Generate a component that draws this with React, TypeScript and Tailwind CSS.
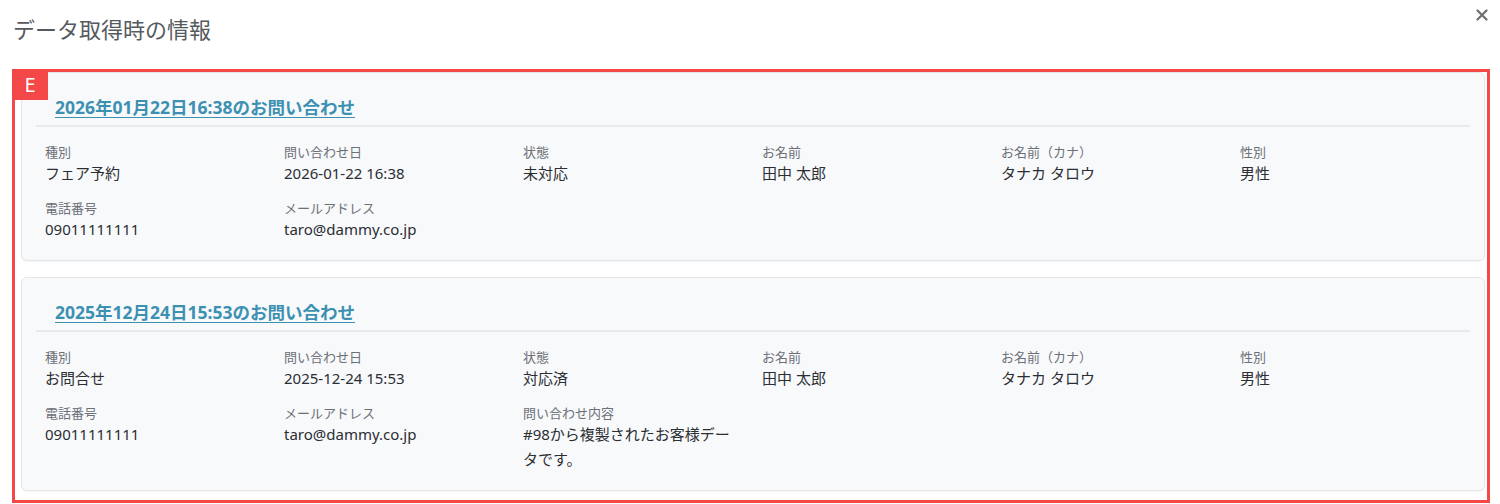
import React from 'react';

type Field = { label: string; value: string };

type Inquiry = {
  title: string;
  rows: Field[][];
};

const inquiries: Inquiry[] = [
  {
    title: '2026年01月22日16:38のお問い合わせ',
    rows: [
      [
        { label: '種別', value: 'フェア予約' },
        { label: '問い合わせ日', value: '2026-01-22 16:38' },
        { label: '状態', value: '未対応' },
        { label: 'お名前', value: '田中 太郎' },
        { label: 'お名前（カナ）', value: 'タナカ タロウ' },
        { label: '性別', value: '男性' },
      ],
      [
        { label: '電話番号', value: '09011111111' },
        { label: 'メールアドレス', value: 'taro@dammy.co.jp' },
      ],
    ],
  },
  {
    title: '2025年12月24日15:53のお問い合わせ',
    rows: [
      [
        { label: '種別', value: 'お問合せ' },
        { label: '問い合わせ日', value: '2025-12-24 15:53' },
        { label: '状態', value: '対応済' },
        { label: 'お名前', value: '田中 太郎' },
        { label: 'お名前（カナ）', value: 'タナカ タロウ' },
        { label: '性別', value: '男性' },
      ],
      [
        { label: '電話番号', value: '09011111111' },
        { label: 'メールアドレス', value: 'taro@dammy.co.jp' },
        { label: '問い合わせ内容', value: '#98から複製されたお客様データです。' },
      ],
    ],
  },
];

function InquiryCard({ inquiry }: { inquiry: Inquiry }) {
  return (
    <div className="rounded-[6px] border border-[#e4e6ea] bg-[#f8f9fb] px-[14px] pt-[22px] pb-[18px] shadow-[0_1px_1px_rgba(0,0,0,0.04)]">
      <div className="pl-[19px] pb-[6px] h-[30px] text-[17.5px] leading-[24px]">
        <a href="#" className="font-bold text-[#3c91b2] underline decoration-1 underline-offset-[3px]">
          {inquiry.title}
        </a>
      </div>
      <div className="h-[2px] bg-[#e7e9ec]" />
      <div className="mt-[16px] pl-[9px] flex flex-col gap-[13px]">
        {inquiry.rows.map((row, i) => (
          <div key={i} className="grid grid-cols-[repeat(6,239px)]">
            {row.map((f) => (
              <div key={f.label} className="pr-[25px]">
                <div className="text-[13px] leading-[18px] text-[#6c7077]">{f.label}</div>
                <div className="text-[15px] leading-[25px] text-[#2b2e33]">{f.value}</div>
              </div>
            ))}
          </div>
        ))}
      </div>
    </div>
  );
}

export default function App() {
  return (
    <div
      className="relative w-[1500px] h-[504px] bg-white overflow-hidden"
      style={{ fontFamily: '"Noto Sans", "Noto Sans CJK JP", sans-serif' }}
    >
      <header className="h-[69px] pl-[13px] pt-[15px]">
        <h1 className="text-[22px] leading-[28px] text-[#555a60] font-normal">データ取得時の情報</h1>
      </header>
      <button className="absolute top-[9px] right-[12px] w-[12px] h-[12px] text-[#6e6e6e]">
        <svg viewBox="0 0 12 12" className="w-[12px] h-[12px]" fill="none" stroke="currentColor" strokeWidth={2.2} strokeLinecap="round">
          <path d="M1.5 1.5 L10.5 10.5 M10.5 1.5 L1.5 10.5" />
        </svg>
      </button>
      <div className="relative ml-[12px] w-[1478px] border-[3px] border-[#f44848] pl-[6px] pr-[2px] pb-[9px]">
        <span className="absolute -top-[3px] -left-[3px] z-10 w-[36px] h-[31px] bg-[#f44848] text-white text-[20px] leading-[31px] text-center">
          E
        </span>
        <div className="flex flex-col gap-[16px]">
          {inquiries.map((q) => (
            <InquiryCard key={q.title} inquiry={q} />
          ))}
        </div>
      </div>
    </div>
  );
}
